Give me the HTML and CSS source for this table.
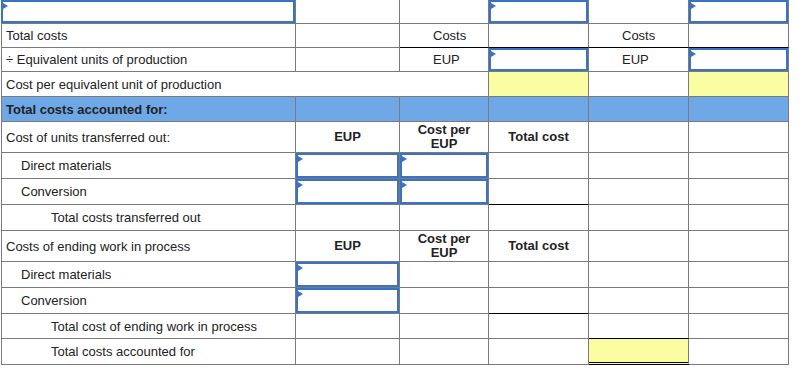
FILE: index.html
```html
<!DOCTYPE html>
<html>
<head>
<meta charset="utf-8">
<link rel="stylesheet" href="styles.css">
</head>
<body>
<div class="sheet">
  <!-- row 1 -->
  <div class="c first"><div class="inp"></div></div>
  <div class="c"></div>
  <div class="c"></div>
  <div class="c"><div class="inp"></div></div>
  <div class="c"></div>
  <div class="c"><div class="inp"></div></div>
  <!-- row 2 -->
  <div class="c t">Total costs</div>
  <div class="c"></div>
  <div class="c t lab bbk">Costs</div>
  <div class="c bbk"></div>
  <div class="c t lab bbk">Costs</div>
  <div class="c bbk"></div>
  <!-- row 3 -->
  <div class="c t">÷ Equivalent units of production</div>
  <div class="c"></div>
  <div class="c t lab">EUP</div>
  <div class="c"><div class="inp"></div></div>
  <div class="c t lab">EUP</div>
  <div class="c"><div class="inp"></div></div>
  <!-- row 4 -->
  <div class="c t span3">Cost per equivalent unit of production</div>
  <div class="c yel"></div>
  <div class="c"></div>
  <div class="c yel"></div>
  <!-- row 5 -->
  <div class="c t blue b">Total costs accounted for:</div>
  <div class="c blue"></div>
  <div class="c blue"></div>
  <div class="c blue"></div>
  <div class="c blue"></div>
  <div class="c blue"></div>
  <!-- row 6 -->
  <div class="c t">Cost of units transferred out:</div>
  <div class="c t hd">EUP</div>
  <div class="c t hd">Cost per<br>EUP</div>
  <div class="c t hd">Total cost</div>
  <div class="c"></div>
  <div class="c"></div>
  <!-- row 7 -->
  <div class="c t i1">Direct materials</div>
  <div class="c"><div class="inp"></div></div>
  <div class="c"><div class="inp"></div></div>
  <div class="c"></div>
  <div class="c"></div>
  <div class="c"></div>
  <!-- row 8 -->
  <div class="c t i1">Conversion</div>
  <div class="c"><div class="inp"></div></div>
  <div class="c"><div class="inp"></div></div>
  <div class="c bbk"></div>
  <div class="c"></div>
  <div class="c"></div>
  <!-- row 9 -->
  <div class="c t i2">Total costs transferred out</div>
  <div class="c"></div>
  <div class="c"></div>
  <div class="c"></div>
  <div class="c"></div>
  <div class="c"></div>
  <!-- row 10 -->
  <div class="c t">Costs of ending work in process</div>
  <div class="c t hd">EUP</div>
  <div class="c t hd">Cost per<br>EUP</div>
  <div class="c t hd">Total cost</div>
  <div class="c"></div>
  <div class="c"></div>
  <!-- row 11 -->
  <div class="c t i1">Direct materials</div>
  <div class="c"><div class="inp"></div></div>
  <div class="c"></div>
  <div class="c"></div>
  <div class="c"></div>
  <div class="c"></div>
  <!-- row 12 -->
  <div class="c t i1">Conversion</div>
  <div class="c"><div class="inp"></div></div>
  <div class="c"></div>
  <div class="c bbk"></div>
  <div class="c"></div>
  <div class="c"></div>
  <!-- row 13 -->
  <div class="c t i2">Total cost of ending work in process</div>
  <div class="c"></div>
  <div class="c"></div>
  <div class="c"></div>
  <div class="c bbk"></div>
  <div class="c"></div>
  <!-- row 14 -->
  <div class="c t i2">Total costs accounted for</div>
  <div class="c"></div>
  <div class="c"></div>
  <div class="c"></div>
  <div class="c yel dbl"></div>
  <div class="c"></div>
</div>
</body>
</html>
```
FILE: styles.css
```css
html, body {
  margin: 0;
  padding: 0;
  background: #fff;
}
body {
  font-family: "Liberation Sans", Arial, sans-serif;
  font-size: 13px;
  color: #222;
}
.sheet {
  margin-left: 1px;
  display: grid;
  grid-template-columns: 294px 104px 89px 100px 100px 100px;
  grid-template-rows: 24px 24px 24px 25px 25px 31px 26px 26px 26px 31px 26px 26px 25px 26px;
  border-left: 1px solid #7b7b7b;
  width: max-content;
}
.c {
  box-sizing: border-box;
  border-right: 1px solid #7b7b7b;
  border-bottom: 1px solid #7b7b7b;
  min-width: 0;
}
.first {
  margin-left: -1px;
}
.t {
  display: flex;
  align-items: center;
  padding-left: 4px;
  white-space: nowrap;
}
.lab {
  padding-left: 33px;
}
.i1 { padding-left: 19px; }
.i2 { padding-left: 49px; }
.span3 { grid-column: span 3; }
.b { font-weight: bold; }
.hd {
  font-weight: bold;
  justify-content: center;
  text-align: center;
  padding-left: 0;
  line-height: 14px;
}
.blue { background: #6fa8e6; }
.yel { background: #fbfda3; }
.bbk { border-bottom-color: #000; }
.dbl { border-bottom: 3px double #000; }
.inp {
  position: relative;
  box-sizing: border-box;
  height: 100%;
  border: 2px solid #3a72c4;
}
.inp::before {
  content: "";
  position: absolute;
  left: 0;
  top: 1px;
  border-left: 5px solid #3a72c4;
  border-top: 3px solid transparent;
  border-bottom: 3px solid transparent;
}
```
